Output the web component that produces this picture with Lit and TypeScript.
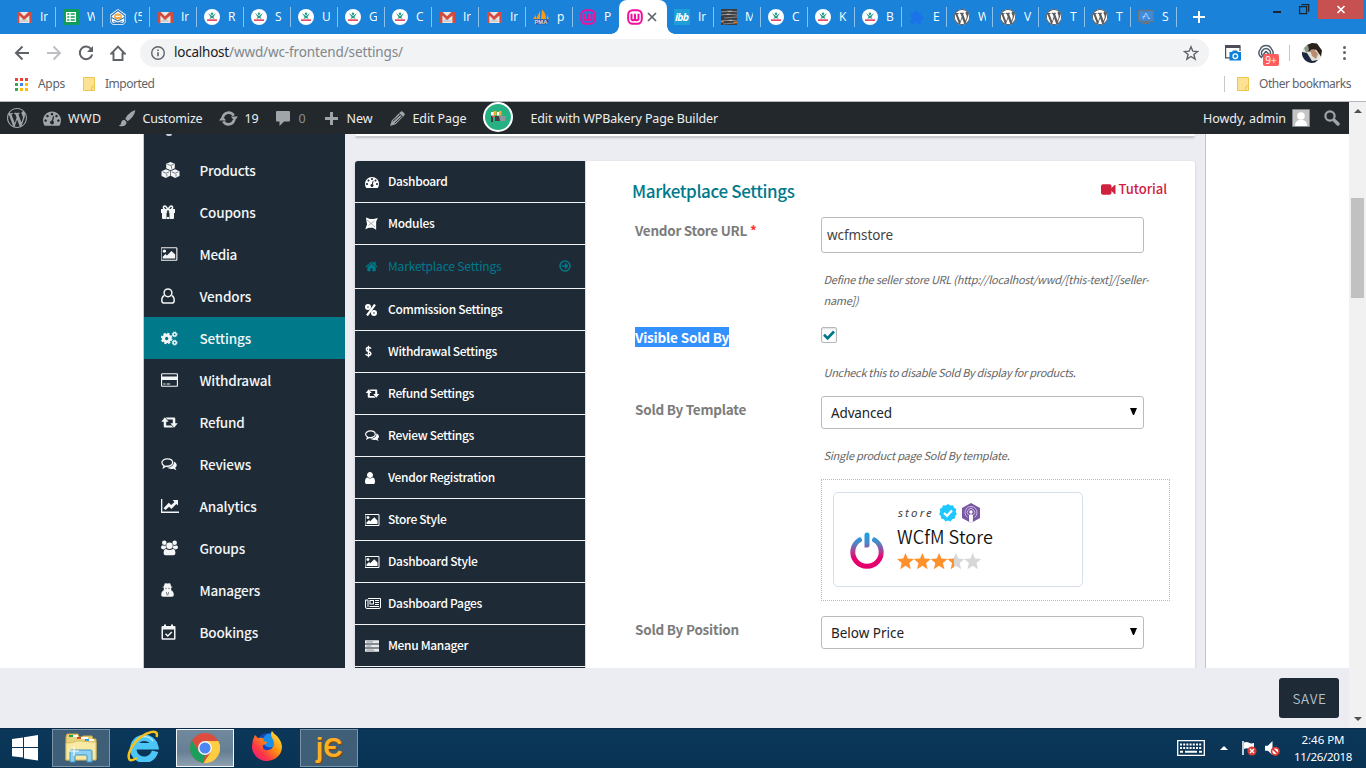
import { LitElement, html, css, svg } from "lit";
import { customElement, property } from "lit/decorators.js";

type Glyph = { box: string; art: unknown };

const dial = "M384 1152q0-53-37.5-90.5t-90.5-37.5-90.5 37.5-37.5 90.5 37.5 90.5 90.5 37.5 90.5-37.5 37.5-90.5zm192-448q0-53-37.5-90.5t-90.5-37.5-90.5 37.5-37.5 90.5 37.5 90.5 90.5 37.5 90.5-37.5 37.5-90.5zm428 481l101-382q6-26-7.5-48.5t-38.5-29.5-48 6.5-30 39.5l-101 382q-60 5-107 43.5t-63 98.5q-20 77 20 146t117 89 146-20 89-117q16-60-6-117t-72-91zm660-33q0-53-37.5-90.5t-90.5-37.5-90.5 37.5-37.5 90.5 37.5 90.5 90.5 37.5 90.5-37.5 37.5-90.5zm-640-640q0-53-37.5-90.5t-90.5-37.5-90.5 37.5-37.5 90.5 37.5 90.5 90.5 37.5 90.5-37.5 37.5-90.5zm448 192q0-53-37.5-90.5t-90.5-37.5-90.5 37.5-37.5 90.5 37.5 90.5 90.5 37.5 90.5-37.5 37.5-90.5zm320 448q0 261-141 483-19 29-54 29h-1402q-35 0-54-29-141-221-141-483 0-182 71-348t191-286 286-191 348-71 348 71 286 191 191 286 71 348z";
const wpMark = "M20 10c0-5.51-4.49-10-10-10C4.48 0 0 4.49 0 10c0 5.52 4.48 10 10 10 5.51 0 10-4.48 10-10zM7.78 15.37L4.37 6.22c.55-.02 1.17-.08 1.17-.08.5-.06.44-1.13-.06-1.11 0 0-1.45.11-2.37.11-.18 0-.37 0-.58-.01C4.12 2.69 6.87 1.11 10 1.11c2.33 0 4.45.87 6.05 2.34-.68-.11-1.65.39-1.65 1.58 0 .74.45 1.36.9 2.1.35.61.55 1.36.55 2.46 0 1.49-1.4 5-1.4 5l-3.03-8.37c.54-.02.82-.17.82-.17.5-.05.44-1.25-.06-1.22 0 0-1.44.12-2.38.12-.87 0-2.33-.12-2.33-.12-.5-.03-.56 1.2-.06 1.22l.92.08 1.26 3.41zM17.41 10c.24-.64.74-1.87.43-4.25.7 1.29 1.05 2.71 1.05 4.25 0 3.29-1.73 6.24-4.4 7.78.97-2.59 1.94-5.2 2.92-7.78zM6.1 18.09C3.12 16.65 1.11 13.53 1.11 10c0-1.3.23-2.48.72-3.59C3.25 10.3 4.67 14.2 6.1 18.09zm4.03-6.63l2.58 6.98c-.86.29-1.76.45-2.71.45-.79 0-1.57-.11-2.29-.33.81-2.38 1.62-4.74 2.42-7.1z";

const gear = (cx: number, cy: number, r: number, tooth: number) => svg`<g fill="none" stroke="currentColor">
  <circle cx=${cx} cy=${cy} r=${r} stroke-width=${r * 0.95}/>
  <circle cx=${cx} cy=${cy} r=${r * 1.55} stroke-width=${r * 0.55} stroke-dasharray="${tooth} ${(r * 1.55 * 6.2832) / 8 - tooth}"/>
</g>`;

const icons: Record<string, Glyph> = {
  // browser chrome
  gmail: { box: "0 0 16 16", art: svg`<path fill="#e9e9e9" d="M1 3h14v11H1z"/><path fill="#cfcfcf" d="M3 13l5-5 5 5z"/><path fill="#d54b3d" d="M1 3h2.6L8 7.2 12.4 3H15a1 1 0 0 1 1 1v10h-2.6V6.4L8 11 3.4 6.4V14H1z"/>` },
  sheets: { box: "0 0 16 16", art: svg`<rect width="16" height="16" rx="1.3" fill="#0f9d58"/><path fill="none" stroke="#fff" stroke-width="1.3" d="M3.6 3.6h8.8v8.8H3.6zM3.6 6.5h8.8M3.6 9.5h8.8M7 3.6v8.8"/>` },
  mail: { box: "0 0 16 16", art: svg`<path fill="#fff" stroke="#fff" stroke-width="1.6" stroke-linejoin="round" d="M1 6L8 1l7 5v7l-2 2H3l-2-2z"/><path fill="#fff" stroke="#2a78bd" stroke-width="1.1" d="M1.200 6.800L8 1.500l6.800 5.300v5.700L13 14.500H3l-1.800-2z"/><ellipse cx="8" cy="7.500" rx="4" ry="3" fill="#f6a43a"/><path fill="none" stroke="#fff" stroke-width="1.200" d="M5.500 7.300h5"/><path fill="none" stroke="#2a78bd" stroke-width="1.100" d="M1.500 8.500L8 12l6.500-3.500M3.500 12.500L8 14l4.500-1.500"/>` },
  runner: { box: "0 0 16 16", art: svg`<circle cx="8" cy="8" r="8" fill="#fff"/><circle cx="8" cy="4.800" r="1.200" fill="#1f9a83"/><path fill="#1f9a83" d="M4 4l4 3 4-3-2.600 3.900L10.500 10 8 9 5.500 10l1.100-2.100z"/><path fill="#e84a68" d="M3 10.300h10v1.700H3z"/>` },
  pma: { box: "0 0 16 16", art: svg`<path fill="#f79a1c" d="M8 10L9 .500C12 3 13 6 13 10zM3 10l4-8v8zM0 10l3-4v4zM14 10V5.500L16 10z"/><path fill="#3f4a86" d="M1.500 10.500h14l-1 4.800H2z"/><text x="1.500" y="15.300" font-size="5.800" font-weight="700" fill="#dcdcea" font-family="Liberation Sans">PMA</text>` },
  woo: { box: "0 0 16 16", art: svg`<rect x="1.200" y="1.200" width="13.600" height="13.600" rx="4.500" fill="none" stroke="#f20f9b" stroke-width="2"/><path fill="none" stroke="#f20f9b" stroke-width="2" stroke-linejoin="round" d="M4.500 4.800v4.600q0 1.800 1.700 1.800T8 9.500V5.500v4q0 1.700 1.800 1.700t1.700-1.800V4.800"/>` },
  ibb: { box: "0 0 16 16", art: svg`<rect width="16" height="16" fill="#1e9fd8"/><text x="1" y="12" font-size="10.500" font-weight="700" font-style="italic" fill="#fff" font-family="Open Sans" textLength="14">ibb</text>` },
  dark: { box: "0 0 16 16", art: svg`<rect width="16" height="16" fill="#3c3d40"/><path stroke="#858585" d="M0 3l9-1 7 1M0 6l7-1 9 1M3 9l13-1M0 12l10-1 6 1M2 15l12-1"/><path stroke="#f47a20" stroke-width="1.600" d="M0 12.500l2.500.5M12.500 13.500H16"/>` },
  puzzle: { box: "0 0 16 16", art: svg`<rect x="1.500" y="4" width="10.500" height="11" rx="1" fill="#1a73e8"/><circle cx="6.800" cy="3.600" r="2.100" fill="#1a73e8"/><circle cx="12.600" cy="9" r="2.100" fill="#1a73e8"/><circle cx="1.500" cy="9.600" r="1.700" fill="#1a83d9"/><circle cx="6.800" cy="15" r="1.700" fill="#1a83d9"/>` },
  wpfav: { box: "0 0 20 20", art: svg`<circle cx="10" cy="10" r="9.800" fill="#fff"/><path fill="#5c5c5c" d=${wpMark}/>` },
  screen: { box: "0 0 16 16", art: svg`<rect x=".600" y="1.500" width="14.800" height="11" rx="1.200" fill="#3f8bdc" stroke="#6c7580" stroke-width="1.300"/><path fill="none" stroke="#a9cdf0" d="M5 10l3-6 3 6M4.500 7.500h3M10 9.500h2"/><path fill="#6c7580" d="M4 13.500h8v1.500H4z"/>` },
  close: { box: "0 0 10 10", art: svg`<path stroke="#5f6368" stroke-width="1.700" d="M1 1l8 8M9 1L1 9"/>` },
  back: { box: "0 0 16 16", art: svg`<path fill="none" stroke="currentColor" stroke-width="2" d="M15 8H2.500M8.500 1.500L2 8l6.500 6.500"/>` },
  reload: { box: "0 0 16 16", art: svg`<path fill="none" stroke="#5f6368" stroke-width="2" d="M13.300 4.300A6.300 6.300 0 1 0 14.200 9.500"/><path fill="#5f6368" d="M15 1v6H9z"/>` },
  house: { box: "0 0 16 16", art: svg`<path fill="none" stroke="#5f6368" stroke-width="1.900" stroke-linejoin="miter" d="M3.500 8.500V15H12.500V8.500h2.200L8 1.700 1.300 8.500z"/>` },
  info: { box: "0 0 16 16", art: svg`<circle cx="8" cy="8" r="6.300" fill="none" stroke="#5f6368" stroke-width="1.400"/><path stroke="#5f6368" stroke-width="1.600" d="M8 7.200v4M8 4.500v1.500"/>` },
  fav: { box: "0 0 16 16", art: svg`<path fill="none" stroke="#5f6368" stroke-width="1.400" d="M8 1.800l1.800 4.400 4.700.3-3.600 3 1.200 4.600L8 11.500l-4.100 2.600 1.200-4.600-3.600-3 4.700-.3z"/>` },
  capture: { box: "0 0 16 16", art: svg`<path fill="#4b4e55" d="M0 0h15.500v3H0z"/><path fill="none" stroke="#4b4e55" stroke-width="1.200" d="M.6 2v10.900H5M15 2v4"/><path fill="#0d7fd6" d="M4.500 7H7l1-1.500h4L13 7h3v8.500H4.500z"/><circle cx="10.300" cy="11.200" r="2.300" fill="none" stroke="#fff" stroke-width="1.300"/>` },
  orbit: { box: "0 0 16 16", art: svg`<g fill="none" stroke="#4c5a68" stroke-width="1.300"><path d="M3.500 11.500A4.500 4.500 0 0 1 3 4.600 5.500 5.500 0 0 1 13 4.600a4.500 4.500 0 0 1-.5 6.900"/><path d="M4.500 10A4 4 0 1 1 11.500 10"/><path d="M8 6.500l-4.500 6M8 6.500l5 5.500"/></g>` },
  face: { box: "0 0 20 20", art: svg`<circle cx="10" cy="10" r="10" fill="#e3e4dc"/><path fill="#1c2740" d="M0 9l5 1 5 8 6-1-3 2.500A10 10 0 0 1 0 9z"/><path fill="#2b211c" d="M5 2l5-2 5 .5 5 7-1 6-5-7-5 2-5 0z"/><path fill="#b98d72" d="M8 7l4-1 4 5-2 5-4-3z"/><path fill="#8a9a8a" d="M2 5l4-3 1 5-3 3z"/>` },
  folder: { box: "0 0 12 14", art: svg`<path fill="#fde293" stroke="#edc64d" d="M.5.500h11v13H.5z"/><path fill="#fde293" stroke="#edc64d" d="M8.500 13.500v-3h1v-1.500h2v4.500z"/>` },
  // admin bar
  wp: { box: "0 0 20 20", art: svg`<path d=${wpMark}/>` },
  dial: { box: "0 0 1792 1792", art: svg`<path d=${dial}/>` },
  brush: { box: "0 0 18 18", art: svg`<path d="M17.800.2C13 1.500 9 5.500 7.200 9.200l2.500 2.600C13.500 9.500 17 5.500 17.800.2zM6.200 10.300c-3 .2-3.200 2.800-3.700 4.500-.3 1-1.200 1.500-2.300 1.500 3.500 2 8.700.8 8.300-3.700z"/>` },
  update: { box: "0 0 20 20", art: svg`<path fill="none" stroke="currentColor" stroke-width="2.800" d="M4 8.500A6.300 6.300 0 0 1 15.500 7M16 11.500A6.300 6.300 0 0 1 4.500 13"/><path d="M12.500 8H20l-3.700 4.700zM0 12h7.500L3.700 7.300z"/>` },
  bubble: { box: "0 0 16 17", art: svg`<path d="M2 1h12q1 0 1 1v8.500q0 1-1 1H9L4.500 16v-4.500H2q-1 0-1-1V2q0-1 1-1z"/>` },
  plus: { box: "0 0 14 14", art: svg`<path d="M5.400 0h3.200v5.400H14v3.200H8.600V14H5.400V8.600H0V5.400h5.400z"/>` },
  pencil: { box: "0 0 16 16", art: svg`<path d="M11 1q1.500-1.500 3 0l1 1q1.500 1.500 0 3L6 14 0 16l2-6z"/><path stroke="#23282d" stroke-width="1" d="M9.500 2.500l4 4M3 11L11 4M5 13l8-7.500"/>` },
  shop: { box: "0 0 30 30", art: svg`<circle cx="15" cy="15" r="14" fill="#27b183" stroke="#fff" stroke-width="2"/><path fill="#443b45" d="M8 13h2v7H8zM12 14h9v5h-9z"/><path fill="#fff" d="M8 10h3v3.500H8zM14 10h2v3.500h-2z"/><path fill="#f5ae2b" d="M10.500 9h3v4.500h-3zM16 9h2.500v4.500H16z"/><path fill="#8f959e" d="M16 14h7l-1 5h-5z"/><path fill="#e5594f" d="M9 14h3v1H9z"/>` },
  avatar: { box: "0 0 18 18", art: svg`<path fill="#c4c4c4" stroke="#82878c" d="M.5.500h17v17H.500z"/><circle cx="9" cy="7" r="3.800" fill="#fff"/><path fill="#fff" d="M3 17q0-5 4-6h4q4 1 4 6z"/>` },
  search: { box: "0 0 16 16", art: svg`<circle cx="6" cy="6" r="4.600" fill="none" stroke="currentColor" stroke-width="2.200"/><path stroke="currentColor" stroke-width="3.400" stroke-linecap="round" d="M10.500 10.500L14 14"/>` },
  // page menus
  cubes: { box: "0 0 19 16", art: svg`<path d="M9.500 0l4.300 1.700v4.600L9.500 8.200 5.200 6.300V1.700zM5 7.300l4.200 1.800v4.700L4.900 16 .5 13.900V9.200zM14 7.300l4.500 1.900v4.700L14.100 16l-4.300-2.200V9.100z"/><path fill="none" stroke="#1e2b36" stroke-width=".6" d="M6.200 2.200l3.300 1.300 3.300-1.300M10.500 4.200v2.500M1.600 9.800L5 11.300l3.300-1.500M5.800 12.200v2.300M10.800 9.800l3.300 1.500 3.300-1.500M15 12.200v2.300"/>` },
  gift: { box: "0 0 14 14", art: svg`<path d="M0 4h14v4H0zM1 8h4.600v6H2q-1 0-1-1zM8.400 8H13v5q0 1-1 1H8.400z"/><path fill="none" stroke="currentColor" stroke-width="1.600" d="M6.500 4C5.500 1.500 5 1 3.800 1 2 1 1.800 4 4 4M7.500 4C8.500 1.500 9 1 10.200 1 12 1 12.200 4 10 4"/><path d="M6 11.500h2V14H6z"/><path fill="#1e2b36" d="M5.900 5.500h2.200V12H5.900z" opacity=".9"/>` },
  image: { box: "0 0 1920 1792", art: svg`<path d="M576 576q0 80-56 136t-136 56-136-56-56-136 56-136 136-56 136 56 56 136zm1024 384v448h-1408v-192l320-320 160 160 512-512zm96-704h-1600q-13 0-22.500 9.500t-9.500 22.500v1216q0 13 9.500 22.500t22.500 9.500h1600q13 0 22.500-9.500t9.500-22.500v-1216q0-13-9.500-22.500t-22.500-9.500zm160 32v1216q0 66-47 113t-113 47h-1600q-66 0-113-47t-47-113v-1216q0-66 47-113t113-47h1600q66 0 113 47t47 113z"/>` },
  person: { box: "0 0 14 16", art: svg`<g fill="none" stroke="currentColor" stroke-width="1.500"><circle cx="7" cy="4.800" r="3.900"/><path d="M3.500 7.500Q.8 8.500.8 12.500q0 2.600 2.500 2.600h7.400q2.500 0 2.500-2.600 0-4-2.700-5"/></g>` },
  cogs: { box: "0 0 18 16", art: svg`${gear(6, 8, 3.4, 2.4)}${gear(14.5, 3.6, 1.7, 1.2)}${gear(14.5, 12.4, 1.7, 1.2)}` },
  card: { box: "0 0 1920 1792", art: svg`<path d="M1760 128q66 0 113 47t47 113v1216q0 66-47 113t-113 47h-1600q-66 0-113-47t-47-113v-1216q0-66 47-113t113-47h1600zm-1600 128q-13 0-22.500 9.500t-9.500 22.500v224h1664v-224q0-13-9.500-22.500t-22.500-9.500h-1600zm1600 1280q13 0 22.500-9.500t9.500-22.500v-608h-1664v608q0 13 9.500 22.500t22.500 9.500h1600zm-1504-128v-128h256v128h-256zm384 0v-128h384v128h-384z"/>` },
  retweet: { box: "0 0 18 12", art: svg`<path d="M4 .4l4 4.800H5.400v4h5.800L13 11.500H4q-1.300 0-1.300-1.300v-5H0zM14 11.600L10 6.800h2.600v-4H6.800L5 .5h9q1.300 0 1.300 1.300v5H18z"/>` },
  chats: { box: "0 0 18 15", art: svg`<path fill="none" stroke="currentColor" stroke-width="1.500" d="M7 1C3.400 1 .8 2.900.8 5.300c0 1.400.9 2.700 2.500 3.500L2.600 11l2.900-1.600c4.500.6 7.700-1.600 7.700-4.200S10.600 1 7 1z"/><path d="M14.600 4c4 2 4.200 5.300 1.600 7.200l1.300 2.800-3.600-1.600c-3 .6-5.700-.1-7.200-1.600 5 .3 8.400-2.700 7.900-6.800z"/>` },
  chart: { box: "0 0 18 14", art: svg`<path d="M0 0h1.300v12.500H18V14H0zM17 1v5.500l-1.700-1.600-4.900 5-2.300-2.200L4.500 11 2.500 9.200l5.300-5.400 2.400 2.300 3.300-3.200L11.600 1z"/>` },
  group: { box: "0 0 18 16", art: svg`<circle cx="9" cy="5.600" r="3.400"/><circle cx="3.500" cy="2.500" r="2.400"/><circle cx="14.500" cy="2.500" r="2.400"/><path d="M4.900 8.700Q7 10.200 9 10.200t4.100-1.500Q15.300 9.500 15.300 13q0 2.800-2.200 2.800H4.900Q2.700 15.800 2.700 13q0-3.500 2.200-4.300zM1.800 5q2 1 3.200.2-.2 1.700.7 2.900Q4 8.200 3.200 9.500 0 9.500 0 7.300 0 5.300 1.800 5zM16.200 5q-2 1-3.200.2.200 1.700-.7 2.900 1.700.1 2.500 1.400 3.200 0 3.200-2.200 0-2-1.800-2.300z"/>` },
  spy: { box: "0 0 14 15", art: svg`<path d="M4 .4Q5 0 7 .6 9 0 10 .4l1 3.200 1.800.8-2 .8q.4 1.500.2 2.500Q13.800 9 13.800 13q0 1.700-2 1.700H2.200Q.2 14.700.2 13 .2 9 3 7.700 2.800 6.700 3.200 5.200l-2-.8L3 3.600z"/><path stroke="#1e2b36" stroke-width=".6" d="M4.500 5.800h1.700M7.800 5.800h1.700M5.800 9.700l.8 3.500M8.200 9.700l-.8 3.500"/>` },
  booking: { box: "0 0 15 16", art: svg`<path fill-rule="evenodd" d="M1.500 2H3V.5h2V2h5V.5h2V2h1.500q1 0 1 1v11.800q0 1-1 1h-12q-1 0-1-1V3q0-1 1-1zM2 5.600v8.700h11V5.600z"/><path fill="none" stroke="currentColor" stroke-width="1.500" d="M4.500 9.700l2.300 2.300 4-4"/>` },
  modx: { box: "0 0 14 14", art: svg`<path d="M1 .5l4.500 1.700h3.800L13.800 1 12 5v8.800l-3.500-2.300H4.200L.3 13.300 2.200 8z"/><path stroke="#1e2b36" stroke-width=".4" d="M2 3l9 8M3.500 9.500L10 4"/>` },
  home: { box: "0 0 1792 1792", art: svg`<path d="M1472 992v480q0 26-19 45t-45 19h-384v-384h-256v384h-384q-26 0-45-19t-19-45v-480q0-1 .5-3t.5-3l575-474 575 474q1 2 1 6zm223-69l-62 74q-8 9-21 11h-3q-13 0-21-7l-692-577-692 577q-12 8-24 7-13-2-21-11l-62-74q-8-10-7-23.500t11-21.500l719-599q32-26 76-26t76 26l244 204v-195q0-14 9-23t23-9h192q14 0 23 9t9 23v408l219 182q10 8 11 21.500t-7 23.500z"/>` },
  percent: { box: "0 0 12 12", art: svg`<g fill="none" stroke="currentColor" stroke-width="2.200"><circle cx="3" cy="3" r="1.900"/><circle cx="9" cy="9" r="1.900"/><path d="M10 .5L2 11.500"/></g>` },
  dollar: { box: "0 0 8 14", art: svg`<path fill="none" stroke="currentColor" stroke-width="1.600" d="M7 3.500Q5.800 2.500 4 2.500q-2.500 0-2.500 2T4 7t2.800 2.400q0 2.100-2.800 2.100-2 0-3.300-1.300M4 .5v13"/>` },
  user: { box: "256 128 1280 1536", art: svg`<path d="M1536 1399q0 109-62.500 187t-150.500 78h-854q-88 0-150.500-78t-62.500-187q0-85 8.500-160.500t31.500-152 58.500-131 94-89 134.500-34.500q131 128 313 128t313-128q76 0 134.500 34.500t94 89 58.500 131 31.500 152 8.500 160.500zm-256-887q0 159-112.500 271.500t-271.500 112.500-271.500-112.500-112.500-271.500 112.500-271.500 271.500-112.500 271.500 112.500 112.500 271.500z"/>` },
  news: { box: "0 0 16 11", art: svg`<path fill="none" stroke="currentColor" d="M3 .5h12.500V9q0 1.500-1.500 1.500H2Q.5 10.500.5 9V2H3v7"/><path fill-rule="evenodd" d="M4.500 2H9v4.500H4.500zM5.500 3v2.500H8V3z"/><path stroke="currentColor" d="M10 2.500h4M10 4.500h4M10 6.500h4M4.500 8.500H14"/>` },
  server: { box: "0 0 14 12", art: svg`<path d="M0 .3h14V3.500H0zM0 4.400h14v3.200H0zM0 8.500h14v3.200H0z" opacity=".9"/><path stroke="#6a727b" stroke-width=".7" d="M1.500 1.900H8M1.500 6h5M1.500 10.100H9"/>` },
  goto: { box: "0 0 12 12", art: svg`<g fill="none" stroke="currentColor" stroke-width="1.500"><circle cx="6" cy="6" r="5"/><path d="M3 6h5M6 3.600L8.400 6 6 8.400"/></g>` },
  video: { box: "0 0 15 11", art: svg`<rect y=".3" width="10.500" height="10.400" rx="2"/><path d="M9 5.500L13.500 1q1-.4 1 .5v8q0 .9-1 .5z"/>` },
  check: { box: "0 0 12 10", art: svg`<path fill="none" stroke="currentColor" stroke-width="2.700" d="M1 4.800l3.600 3.500L11 1.500"/>` },
  verified: { box: "0 0 18 18", art: svg`<path fill="#1ec7ff" d="M9 0l2.300 1.400 2.700-.2 1 2.500 2.300 1.400-.6 2.600 1.200 2.200-1.800 2-.2 2.700-2.600.7L11.500 17.400 9 16.600l-2.500.8L4.700 15.300l-2.600-.7-.2-2.700L.1 9.900l1.200-2.200L.7 5.100 3 3.700l1-2.500 2.700.2z"/><path fill="none" stroke="#fff" stroke-width="2.300" d="M5 9l3 2.800 5-5.300"/>` },
  badge: { box: "0 0 18 20", art: svg`<path fill="#7857a3" d="M9 0l9 5v10l-9 5-9-5V5z"/><g fill="none" stroke="#cdb9e4" stroke-width="1"><path d="M5.700 14.500a6 6 0 1 1 6.600 0M6.500 12a3.700 3.700 0 1 1 5 0"/></g><circle cx="9" cy="9" r="1.700" fill="#fff"/><path fill="#fff" d="M7 12q2-1.500 4 0l-.2 7-1.800 1-1.800-1z"/>` },
  // taskbar
  windows: { box: "0 0 26 26", art: svg`<path fill="#fff" d="M0 4l11-1.600V12H0zM12 2.200L26 0v12H12zM0 13h11v9.500L0 21.300zM12 13h14v12.500l-14-2z"/>` },
  explorer: { box: "0 0 32 30", art: svg`<path fill="#e8d37c" stroke="#c9a94a" d="M1 27V4l1-3h11l1 3h3l1-1h9l1 3h3v20z"/><path fill="#18a848" d="M4 2h4v2H4z"/><path fill="#fff" d="M8 2h5v2H8zM15 4h8v2h-8zM23 6h6v2h-6z"/><path fill="#d24b2a" d="M12 4h4v2h-4z"/><path fill="#2b9cf0" d="M20 6h4v2h-4z"/><path fill="#f8e9a5" stroke="#d9bb5e" d="M1 10q8 0 10-2h6q2 1 14 1v18H1z"/><path fill="#8fd0f0" stroke="#3d94c7" d="M5 29V18q0-1 2-1h18q2 0 2 1v11h-5v-6q0-1-1-1H11q-1 0-1 1v6z"/><path stroke="#fff" d="M9 13v10M4 18h10"/>` },
  ie: { box: "0 0 32 32", art: svg`<path fill="none" stroke="#4cc6f6" stroke-width="6.500" d="M28 21.300A11 11 0 1 1 28 16.300H9"/><path fill="none" stroke="#b7ecff" stroke-width="1.400" d="M7.500 14A10.500 10.500 0 0 1 26 11"/><path fill="none" stroke="#f6c31c" stroke-width="2.500" d="M10 28Q4 31.500 2.500 29.500C-.5 25 5 14 14 7 21 1.800 28 .5 29.500 3q.9 1.500 0 4"/>` },
  chrome: { box: "0 0 30 30", art: svg`<circle cx="15" cy="15" r="15" fill="#dc4d3f"/><path fill="#1a9f5c" d="M2 7.500L8.800 18.500 15 22l-1.500 7.900A15 15 0 0 1 2 7.500z"/><path fill="#ffcd42" d="M15 8h13.300A15 15 0 0 1 13.500 30L21.500 18z"/><circle cx="15" cy="15" r="7" fill="#f4f4f4"/><circle cx="15" cy="15" r="5.500" fill="#4a86f4"/>` },
  firefox: { box: "0 0 30 30", art: svg`<defs><linearGradient id="fx" x1="1" y1="0" x2="0" y2="1"><stop offset="0" stop-color="#fff44f"/><stop offset=".4" stop-color="#ff980e"/><stop offset=".7" stop-color="#ff3647"/><stop offset="1" stop-color="#e31587"/></linearGradient></defs><circle cx="15.500" cy="12.500" r="10.500" fill="#1546c0"/><circle cx="18" cy="9.500" r="7" fill="#1690e8"/><path fill="url(#fx)" d="M3 4l3 3q4-1 6 1l-1 2 4 1q0 2-4 3-1 3 2 5 7 1 9-5 0-5-2-7-2-5 0-7 2 3 5 5 5 6 5 11a15 14.500 0 0 1-30-1Q0 9 3 4z"/>` },
  keyboard: { box: "0 0 28 16", art: svg`<path fill="none" stroke="#fff" stroke-width="1.300" d="M.7.700h26.600v14.600H.7z"/><path stroke="#fff" stroke-width="2" stroke-dasharray="2 1.200" d="M3 4.500h22M3 8h22"/><path stroke="#fff" stroke-width="2" d="M3 11.700h3M8 11.700h12M22 11.700h3"/>` },
  flag: { box: "0 0 16 16", art: svg`<path stroke="#fff" stroke-width="1.500" d="M2 1v14"/><path fill="#fff" d="M3 2.500q3-1 5 .3t5 .3v6q-3 1.500-5 0t-5 0"/><circle cx="11" cy="11" r="4.600" fill="#d63a32"/><path stroke="#fff" stroke-width="1.400" d="M9 9l4 4M13 9l-4 4"/>` },
  muted: { box: "0 0 16 16", art: svg`<path fill="#fff" d="M0 5h3l5-5v15l-5-4.500H0z"/><circle cx="11" cy="11" r="4" fill="#fff" stroke="#d63a32" stroke-width="1.800"/><path stroke="#d63a32" stroke-width="1.800" d="M8.200 8.200l5.600 5.600"/>` },
};

/** Draws one glyph of the icon set at the given size. */
@customElement("ui-icon")
class UiIcon extends LitElement {
  @property() name = "";
  @property({ type: Number }) w = 16;
  @property({ type: Number }) h = 0;
  static styles = css`:host{display:inline-flex;flex:none}svg{display:block;fill:currentColor}`;
  render() {
    const g = icons[this.name];
    return html`<svg width=${this.w} height=${this.h || this.w} viewBox=${g.box}>${g.art}</svg>`;
  }
}

/** A single line of text tracked so that it fills the width w. */
@customElement("fit-text")
class FitText extends LitElement {
  @property() text = "";
  @property({ type: Number }) w = 0;
  static styles = css`:host{display:block;flex:none;white-space:pre}span{display:inline-block}`;
  render() { return html`<span>${this.text}</span>`; }
  firstUpdated() {
    const s = this.renderRoot.querySelector("span") as HTMLElement;
    const gap = (this.w - s.getBoundingClientRect().width) / this.text.length;
    this.style.width = `${this.w}px`;
    s.style.letterSpacing = `${gap}px`;
  }
}

const t = (text: string, w: number, cls = "") => html`<fit-text class=${cls} .text=${text} .w=${w}></fit-text>`;
const i = (name: string, w: number, h = 0, cls = "") => html`<ui-icon class=${cls} .name=${name} .w=${w} .h=${h}></ui-icon>`;

const tabsBefore = [["gmail", "Ir"], ["sheets", "W"], ["mail", "(5"], ["gmail", "Ir"], ["runner", "R"], ["runner", "S"], ["runner", "U"], ["runner", "G"], ["runner", "C"], ["gmail", "Ir"], ["gmail", "Ir"], ["pma", "p"], ["woo", "P"]];
const tabsAfter = [["ibb", "Ir"], ["dark", "M"], ["runner", "C"], ["runner", "K"], ["runner", "B"], ["puzzle", "E"]];
const tabsEnd = [["wpfav", "W"], ["wpfav", "V"], ["wpfav", "T"], ["wpfav", "T"], ["screen", "S"]];

const menu: [string, number, number, string, number][] = [
  ["cubes", 19, 16, "Products", 56], ["gift", 14, 14, "Coupons", 56], ["image", 17, 16, "Media", 37.5],
  ["person", 14, 16, "Vendors", 51.5], ["cogs", 17, 15, "Settings", 51.5], ["card", 17, 16, "Withdrawal", 71.5],
  ["retweet", 17, 11, "Refund", 45], ["chats", 16, 13, "Reviews", 51.5], ["chart", 18, 14, "Analytics", 57],
  ["group", 17, 16, "Groups", 45.5], ["spy", 13, 14, "Managers", 60.5], ["booking", 15, 16, "Bookings", 58.5],
];
const sections: [string, number, number, string, number][] = [
  ["dial", 14, 14, "Dashboard", 59.5], ["modx", 13, 13, "Modules", 46.5], ["home", 13, 13, "Marketplace Settings", 113.500],
  ["percent", 12, 12, "Commission Settings", 114.500], ["dollar", 7, 13, "Withdrawal Settings", 109], ["retweet", 15, 9, "Refund Settings", 86],
  ["chats", 14, 12, "Review Settings", 86], ["user", 10, 12, "Vendor Registration", 107], ["image", 15, 14, "Store Style", 58.5],
  ["image", 15, 14, "Dashboard Style", 89.5], ["news", 16, 11, "Dashboard Pages", 94], ["server", 14, 12, "Menu Manager", 80],
];

@customElement("app-root")
class AppRoot extends LitElement {
  static styles = css`
    :host{display:flex;flex-direction:column;width:1366px;height:768px;overflow:hidden;background:#fff;font-family:"Noto Sans",sans-serif;--navy:#1e2b36;--teal:#00798b;--mist:#ecedf2}
    *{box-sizing:border-box}
    .tabs{height:34px;background:#1a83d9;display:flex;padding-left:9px;color:#fff;flex:none}
    .tab{width:47px;height:34px;display:flex;align-items:center;padding-left:7px;position:relative;flex:none}
    .tab:after{content:"";margin-left:auto;width:1px;height:20px;background:#8cc1ec}
    .tab.bare:after{display:none}
    .tab.w45{width:45px}.tab.w46{width:46px}
    .tab .ltr{width:8px;margin-left:8px;overflow:hidden;font:12px/16px "Open Sans",sans-serif;white-space:nowrap}
    .tab.on{background:#fff;border-radius:8px 8px 0 0;width:48px;margin-left:-1px;padding-left:8px;gap:4px}
    .tab.on:after{display:none}
    .tab.on:before{content:"";position:absolute;left:-8px;right:-8px;bottom:0;height:8px;background:radial-gradient(circle at 0 0,transparent 7.500px,#fff 8px) 0 0/8px 8px no-repeat,radial-gradient(circle at 100% 0,transparent 7.500px,#fff 8px) 100% 0/8px 8px no-repeat}
    .new{margin-left:16px;align-self:center}
    .win{margin-left:auto;display:flex;height:20px;padding-right:3px}
    .win .close{width:45px;height:19px;background:#c75050}
    .bar{height:37px;display:flex;align-items:center;flex:none;padding-left:14px;color:#5f6368}
    .bar>.nav{margin-right:16px}.pale{color:#bdbfc2}
    .omni{height:28px;width:1069px;border-radius:14px;background:#f1f3f4;display:flex;align-items:center;padding:0 10px;margin-left:-2px;font:13.500px/20px "Noto Sans",sans-serif;color:#80868b}
    .omni .host{color:#202124;margin-left:8px}.omni .fav{margin-left:auto}
    .omni fit-text{margin-top:-1px}
    .ext{position:relative;display:flex}
    .count{position:absolute;left:6px;top:10px;width:16px;height:12px;background:#ff5c5c;color:#fff;border-radius:2px;font:10px/12px "Open Sans",sans-serif;text-align:center}
    .vr{width:1px;height:16px;background:#c6c8ca}
    .dots{display:flex;flex-direction:column;gap:2.500px;margin-left:21px}.dots b{width:3px;height:3px;border-radius:2px;background:#5f6368}
    .marks{height:30px;display:flex;align-items:center;padding:0 15px 4px;flex:none;font:12px/16px "Noto Sans",sans-serif;color:#5f6368}
    .rule{height:1px;background:#b5b5ba;flex:none}
    .view{display:flex;height:626px;flex:none}
    .doc{width:1349px;display:flex;flex-direction:column}
    .admin{height:32px;background:#23282d;display:flex;align-items:center;color:#a0a5aa;flex:none;padding-left:7px;font:12.500px/20px "Noto Sans",sans-serif}
    .admin .t{color:#eee}.admin .dim{color:#8a8f94}
    .admin fit-text{margin-top:1px}
    .shop{margin:-2px 0 0 16px}
    .page{height:534px;display:flex;overflow:hidden;flex:none}
    .frame{margin-left:143px;width:1063px;border-left:1px solid #c8c9ce;border-right:1px solid #c2c3ca;background:var(--mist);display:flex}
    .side{width:201px;background:var(--navy);color:#fff;overflow:hidden}
    .peek{height:15px;padding-left:22px}.peek b{display:block;width:6px;height:2px;border-radius:0 0 3px 3px;background:#ccd}
    .mi{height:42px;display:flex;align-items:center;padding-left:17px;font:500 13.500px/20px "Noto Sans CJK SC",sans-serif;color:#f4f5f6}
    .mi.on{background:var(--teal)}.mi .ic{width:38.500px;display:flex}
    .main{margin-left:10px;width:840px}
    .strip{height:2px;background:#fff;box-shadow:0 2px 2px #b9b9bd;border-radius:0 0 3px 3px}
    .panel{margin-top:25px;height:560px;background:#fff;border-radius:3px;display:flex;box-shadow:0 1px 3px #c9c9cf}
    .nav2{width:231px;border-right:1px solid #ddd;border-radius:3px 0 0 0;background:var(--navy);overflow:hidden}
    .si{height:42px;border-bottom:1px solid #f3f3f5;display:flex;align-items:center;padding-left:10px;color:#fff;font:500 12px/18px "Noto Sans CJK SC",sans-serif}
    .si fit-text{margin-top:-2px}
    .si.on{height:44px;color:var(--teal);font-weight:400}.si .ic{width:23px;display:flex}.si .go{margin-left:auto;margin-right:14px}
    .si.on .ic,.si.on .go{margin-top:-1px}
    .form{width:609px;padding:17px 24px 0 46px}
    .head{display:flex;justify-content:space-between;height:39px}
    .title{font:500 17px/26px "Noto Sans CJK SC",sans-serif;color:var(--teal)}
    .tut{display:flex;align-items:center;height:20px;gap:3px;margin-right:4px;margin-top:1px;color:#d0213f;font:500 13px/20px "Noto Sans CJK SC",sans-serif}
    .row{display:grid;grid-template-columns:186px 1fr;padding-left:3px}
    .lab{font:700 13.500px/20px "Noto Sans CJK SC",sans-serif;color:#7c7c7c;display:flex;align-self:start;gap:3px;margin-top:3px}
    .lab .req{color:#f33}
    .sel{background:#3390ff;color:#fff}
    .field{width:323px;height:36px;border:1px solid #bbb;border-radius:3px;display:flex;align-items:center;padding-left:5px;font-size:13.500px;line-height:20px;color:#444}
    .field.pick{height:33px;padding:0 6px 0 9px;color:#222;justify-content:space-between}
    .arr{border:3.500px solid transparent;border-top:7px solid #000;border-bottom:0;margin-top:-3px;width:7px}
    .desc{font:italic 11px/21px "Noto Sans CJK SC",sans-serif;color:#666;padding-left:2.500px}
    .desc.d1{padding-top:16px}.desc.d2{padding-top:19px}.desc.d3{padding-top:16px;padding-bottom:13px}
    .r2{padding-top:16px}.r2 .lab{margin-top:0}.r3{padding-top:13px}.r4{padding-top:15px}
    .box{width:16px;height:16px;border:1px solid #b4b9be;border-radius:2px;display:flex;align-items:center;justify-content:center;color:var(--teal);box-shadow:inset 0 1px 2px #0002}
    .demo{width:349px;height:122px;border:1px dotted #bbb;padding:12px 0 0 11px}
    .store{width:250px;height:95px;border:1px solid #d5dfea;border-radius:5px;display:flex;padding:10px 0 0 15px}
    .power{width:36px;margin-top:28px}
    .info{margin-left:12px}
    .kind{display:flex;align-items:center;height:20px;font:italic 11.500px/20px "Noto Sans",sans-serif;color:#444;padding-left:1px}
    .kind ui-icon{margin-left:5px}
    .name{font:350 18px/26px "Noto Sans CJK SC",sans-serif;color:#111}
    .stars{display:block;margin-top:4px}
    .foot{height:60px;background:var(--mist);display:flex;align-items:center;padding:0 10px 9px 0;justify-content:flex-end;flex:none}
    .save{width:60px;height:40px;margin-top:8px;background:var(--navy);border-radius:3px;color:#b5c3cc;display:flex;align-items:center;justify-content:center;padding-left:1px;font:350 13.500px/20px "Noto Sans CJK SC",sans-serif}
    .scroll{width:17px;background:#f1f1f1;display:flex;flex-direction:column;align-items:center;padding:7px 0}
    .up{border:4px solid transparent;border-bottom:4px solid #505050;border-top:0}
    .thumb{width:13px;height:100px;margin-top:85px;background:#c1c1c1}
    .down{border:4px solid transparent;border-top:4px solid #505050;border-bottom:0;margin-top:auto}
    .task{height:40px;background:linear-gradient(#062946,#0b375a 2px,#093353);display:flex;align-items:center;flex:none;padding-left:12px}
    .tb{width:58px;height:38px;border:1px solid #7d94a7;background:#3f5f79;display:flex;align-items:center;justify-content:center}
    .tb.on{background:linear-gradient(#71899d,#667f94 60%,#8fa1b1);border:1px solid #f2f5f7}
    .je{font:700 27px/30px "Liberation Sans",sans-serif;color:#ffad22;text-shadow:1px 1px 1px #74460c}
    .tri{border:4px solid transparent;border-bottom:4px solid #fff;border-top:0}
    .clock{font:11.500px/17px "Noto Sans",sans-serif;color:#fff;display:flex;flex-direction:column;align-items:center}
    .g6{margin-left:6px}.g7{margin-left:7px}.g8{margin-left:8px}.g9{margin-left:9px}.g10{margin-left:10px}.g12{margin-left:12px}.g14{margin-left:14px}.g16{margin-left:16px}.g17{margin-left:17px}.g18{margin-left:18px}
    .push{margin-left:auto}
  `;

  tab([icon, letter]: string[], cls = "") {
    return html`<div class="tab ${cls}">${i(icon, 16)}<span class="ltr">${letter}</span></div>`;
  }

  browser() {
    return html`
      <div class="tabs">
        ${tabsBefore.map((x, n) => this.tab(x, n === 12 ? "bare" : ""))}
        <div class="tab on">${i("woo", 16)}${i("close", 10)}</div>
        ${tabsAfter.map((x, n) => this.tab(x, n === 5 ? "w45" : ""))}
        ${tabsEnd.map((x) => this.tab(x, "w46"))}
        <svg class="new" width="12" height="12"><path stroke="#fff" stroke-width="2" d="M6 0v12M0 6h12"/></svg>
        <div class="win">
          <svg width="45" height="20"><path fill="none" stroke="#1b2530" stroke-width="2" d="M0 12h8"/><path fill="none" stroke="#1b2530" stroke-width="1.300" d="M26.600 6.600h7v7h-7zM28.500 4.600h7.200v7.200"/></svg>
          <svg class="close" width="45" height="19"><path stroke="#fff" stroke-width="1.700" d="M19.500 6l7 7M26.500 6l-7 7"/></svg>
        </div>
      </div>
      <div class="bar">
        ${i("back", 16, 16, "nav")}
        <svg class="nav pale" width="16" height="16"><path fill="none" stroke="#bdbfc2" stroke-width="2" d="M1 8h12.500M7.500 1.500L14 8l-6.500 6.500"/></svg>
        ${i("reload", 16, 16, "nav")}${i("house", 16, 16, "nav")}
        <div class="omni">${i("info", 16)}${t("localhost", 55, "host")}${t("/wwd/wc-frontend/settings/", 174)}${i("fav", 16, 16, "fav")}</div>
        ${i("capture", 16, 16, "g16")}
        <div class="ext g16">${i("orbit", 18)}<span class="count">9+</span></div>
        <div class="vr g14"></div>${i("face", 20, 20, "g12")}
        <div class="dots"><b></b><b></b><b></b></div>
      </div>
      <div class="marks">
        <svg width="13" height="13"><path fill="#ea4335" d="M0 0h3v3H0zM5 0h3v3H5zM10 0h3v3h-3z"/><path fill="#34a853" d="M0 5h3v3H0zM0 10h3v3H0z"/><path fill="#4285f4" d="M5 5h3v3H5z"/><path fill="#fbbc05" d="M10 5h3v3h-3zM5 10h3v3H5zM10 10h3v3h-3z"/></svg>
        ${t("Apps", 27, "g10")}${i("folder", 12, 14, "g18")}${t("Imported", 49.5, "g10")}
        <div class="vr push"></div>${i("folder", 12, 14, "g12")}${t("Other bookmarks", 92, "g10")}
      </div>
      <div class="rule"></div>`;
  }

  adminBar() {
    return html`<div class="admin">
      ${i("wp", 20)}${i("dial", 18, 18, "g16")}${t("WWD", 33.5, "t g7")}
      ${i("brush", 18, 17, "g16")}${t("Customize", 60, "t g7")}
      ${i("update", 19, 19, "g16")}${t("19", 14, "t g7")}
      ${i("bubble", 16, 17, "g16")}${t("0", 8, "dim g8")}
      ${i("plus", 13, 13, "g18")}${t("New", 26, "t g9")}
      ${i("pencil", 15, 15, "g17")}${t("Edit Page", 54, "t g8")}
      ${i("shop", 30, 30, "shop")}${t("Edit with WPBakery Page Builder", 187.5, "t g18")}
      ${t("Howdy, admin", 83, "t push")}${i("avatar", 18, 18, "g6")}${i("search", 16, 16, "g14")}<span class="g9"></span>
    </div>`;
  }

  form() {
    return html`<div class="form">
      <div class="head">${t("Marketplace Settings", 162.5, "title")}<div class="tut">${i("video", 15, 11)}${t("Tutorial", 48.5)}</div></div>
      <div class="row">
        <div class="lab">${t("Vendor Store URL", 112)}<span class="req">*</span></div>
        <div><div class="field">${t("wcfmstore", 66)}</div>
          <div class="desc d1">${t("Define the seller store URL (http://localhost/wwd/[this-text]/[seller-", 325)}${t("name])", 35)}</div></div>
      </div>
      <div class="row r2">
        <div class="lab">${t("Visible Sold By", 94, "sel")}</div>
        <div><div class="box">${i("check", 12, 10)}</div><div class="desc d2">${t("Uncheck this to disable Sold By display for products.", 252)}</div></div>
      </div>
      <div class="row r3">
        <div class="lab">${t("Sold By Template", 111)}</div>
        <div><div class="field pick">${t("Advanced", 61)}<i class="arr"></i></div>
          <div class="desc d3">${t("Single product page Sold By template.", 186)}</div>
          <div class="demo"><div class="store">
            <svg class="power" width="36" height="40" viewBox="0 0 36 40"><defs><linearGradient id="pw" gradientUnits="userSpaceOnUse" x1="0" y1="2" x2="0" y2="36"><stop offset="0" stop-color="#12a5e8"/><stop offset=".3" stop-color="#4f86c6"/><stop offset=".6" stop-color="#c52a86"/><stop offset=".75" stop-color="#e6006e"/></linearGradient></defs><g fill="none" stroke="url(#pw)" stroke-width="5" stroke-linecap="round"><path d="M10.500 9A14.200 14.200 0 1 0 25.500 9M18 4V14L18.010 14"/></g></svg>
            <div class="info"><div class="kind">${t("store", 36)}${i("verified", 18, 18)}<span></span>${i("badge", 18, 20, "g7")}</div>
              ${t("WCfM Store", 96, "name")}
              <svg class="stars" width="85" height="17">
                <defs><linearGradient id="half"><stop offset=".36" stop-color="#ff912c"/><stop offset=".36" stop-color="#d7d7d7"/></linearGradient></defs>
                ${[0, 1, 2, 3, 4].map((k) => svg`<path transform="translate(${k * 16.8} 0)" fill=${k < 3 ? "#ff912c" : k === 3 ? "url(#half)" : "#d7d7d7"} d="M8.500 0l2.300 5.600 6.200.4-4.700 4 1.500 6.200-5.300-3.400-5.300 3.400L4.700 10 0 6l6.200-.4z"/>`)}
              </svg></div>
          </div></div></div>
      </div>
      <div class="row r4"><div class="lab">${t("Sold By Position", 104)}</div><div class="field pick">${t("Below Price", 73)}<i class="arr"></i></div></div>
    </div>`;
  }

  render() {
    return html`${this.browser()}
      <div class="view"><div class="doc">
        ${this.adminBar()}
        <div class="page"><div class="frame">
          <div class="side"><div class="peek"><b></b></div>
            ${menu.map(([n, w, h, l, tw]) => html`<div class="mi ${l === "Settings" ? "on" : ""}"><span class="ic">${i(n, w, h)}</span>${t(l, tw)}</div>`)}</div>
          <div class="main"><div class="strip"></div>
            <div class="panel"><div class="nav2">
              ${sections.map(([n, w, h, l, tw], k) => html`<div class="si ${k === 2 ? "on" : ""}"><span class="ic">${i(n, w, h)}</span>${t(l, tw)}${k === 2 ? i("goto", 12, 12, "go") : ""}</div>`)}
            </div>${this.form()}</div>
          </div>
        </div></div>
        <div class="foot"><div class="save">${t("SAVE", 34)}</div></div>
      </div>
      <div class="scroll"><i class="up"></i><i class="thumb"></i><i class="down"></i></div></div>
      <div class="task">
        ${i("windows", 26)}<div class="tb g14">${i("explorer", 32, 30)}</div>
        <span class="g17">${i("ie", 32, 32)}</span><div class="tb on g17">${i("chrome", 30)}</div>
        <span class="g18">${i("firefox", 30)}</span><div class="tb g18"><span class="je">j&#x404;</span></div>
        ${i("keyboard", 28, 16, "push")}<span class="g7"></span><i class="tri g8"></i><span class="g6"></span>${i("flag", 16, 16, "g7")}${i("muted", 15, 15, "g8")}
        <div class="clock g14">${t("2:46 PM", 43)}${t("11/26/2018", 58)}</div><span class="g14"></span>
      </div>`;
  }
}
